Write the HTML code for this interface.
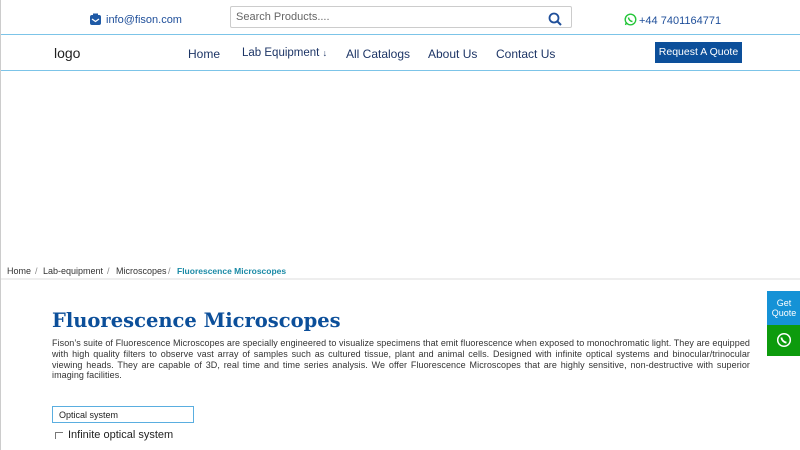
<!DOCTYPE html>
<html><head><meta charset="utf-8"><style>
*{margin:0;padding:0;box-sizing:border-box}
body{width:800px;height:450px;overflow:hidden;background:#fff;font-family:"Liberation Sans",sans-serif;position:relative;border-left:1px solid #ccc}
.a{position:absolute;white-space:nowrap}
.bc{position:absolute;top:266px;font-size:9px;color:#333;white-space:nowrap}
</style></head><body>
<svg class="a" style="left:88px;top:13px" width="13" height="13" viewBox="0 0 13 13"><rect x="1" y="2" width="11" height="10" rx="2" fill="#1f5aa6"/><path d="M3 6l3.5 2.5L10 6" stroke="#fff" stroke-width="1.3" fill="none"/><rect x="4" y="0.5" width="5" height="3" fill="#1f5aa6"/></svg>
<div class="a" style="left:105px;top:14px;font-size:11px;color:#1f4f9a">info@fison.com</div>
<div class="a" style="left:229px;top:6px;width:342px;height:22px;border:1px solid #ccc;border-radius:2px"></div>
<div class="a" style="left:235px;top:11px;font-size:11px;color:#666">Search Products....</div>
<svg class="a" style="left:547px;top:12px" width="14" height="14" viewBox="0 0 14 14"><circle cx="6" cy="6" r="4.5" stroke="#1f4f9a" stroke-width="1.8" fill="none"/><path d="M9.5 9.5l3.5 3.5" stroke="#1f4f9a" stroke-width="2"/></svg>
<svg class="a" style="left:623px;top:13px" width="13" height="13" viewBox="0 0 13 13"><circle cx="6.5" cy="6.5" r="5.3" stroke="#25c63a" stroke-width="1.4" fill="none"/><path d="M1.5 12l1-3" stroke="#25c63a" stroke-width="1.4"/><path d="M4.5 4.5c0 2 2 4 4 4" stroke="#25c63a" stroke-width="1.5" fill="none"/></svg>
<div class="a" style="left:638px;top:15px;font-size:11px;color:#1f4f9a">+44 7401164771</div>
<div class="a" style="left:0;top:34px;width:800px;height:37px;border-top:1px solid #7cc4e8;border-bottom:1px solid #7cc4e8;border-right:1px solid #7cc4e8"></div>
<div class="a" style="left:53px;top:45px;font-size:14px;color:#222">logo</div>
<div class="a" style="left:187px;top:47px;font-size:12px;color:#1d3566">Home</div>
<div class="a" style="left:241px;top:47px;font-size:11.5px;color:#1d3566">Lab Equipment <span style="font-size:9px">↓</span></div>
<div class="a" style="left:345px;top:47px;font-size:12px;color:#1d3566">All Catalogs</div>
<div class="a" style="left:427px;top:47px;font-size:12px;color:#1d3566">About Us</div>
<div class="a" style="left:495px;top:47px;font-size:12px;color:#1d3566">Contact Us</div>
<div class="a" style="left:654px;top:42px;width:87px;height:21px;background:#0c4f9a;color:#fff;font-size:10.5px;text-align:center;line-height:21px">Request A Quote</div>
<div class="bc" style="left:6px">Home</div>
<div class="bc" style="left:34px;color:#888">/</div>
<div class="bc" style="left:42px">Lab-equipment</div>
<div class="bc" style="left:106px;color:#888">/</div>
<div class="bc" style="left:115px">Microscopes</div>
<div class="bc" style="left:167px;color:#888">/</div>
<div class="bc" style="left:176px;font-size:8.5px;font-weight:bold;color:#1a8aa6">Fluorescence Microscopes</div>
<div class="a" style="left:0;top:278px;width:800px;height:2px;background:#eee"></div>
<div class="a" style="left:51px;top:309px;font-family:'DejaVu Serif',serif;font-weight:bold;font-size:19.5px;color:#0c4f9a">Fluorescence Microscopes</div>
<div class="a" style="left:51px;top:338px;width:698px;white-space:normal;font-size:9px;letter-spacing:0.07px;line-height:10.8px;color:#333;text-align:justify">Fison’s suite of Fluorescence Microscopes are specially engineered to visualize specimens that emit fluorescence when exposed to monochromatic light. They are equipped with high quality filters to observe vast array of samples such as cultured tissue, plant and animal cells. Designed with infinite optical systems and binocular/trinocular viewing heads. They are capable of 3D, real time and time series analysis. We offer Fluorescence Microscopes that are highly sensitive, non-destructive with superior imaging facilities.</div>
<div class="a" style="left:51px;top:406px;width:142px;height:17px;border:1px solid #5aaee0;font-size:9px;color:#222;padding:3px 6px">Optical system</div>
<div class="a" style="left:54px;top:432px;width:8px;height:7px;border-left:1px solid #777;border-top:1px solid #777"></div>
<div class="a" style="left:67px;top:429px;font-size:11px;color:#222">Infinite optical system</div>
<div class="a" style="left:766px;top:291px;width:34px;height:34px;background:#1592d6;color:#fff;font-size:9px;text-align:center;line-height:10px;padding-top:7px">Get<br>Quote</div>
<div class="a" style="left:766px;top:325px;width:34px;height:31px;background:#0d9b0d"></div>
<svg class="a" style="left:775px;top:332px" width="16" height="16" viewBox="0 0 16 16"><circle cx="8" cy="8" r="6.3" stroke="#fff" stroke-width="1.5" fill="none"/><path d="M5.5 5.5c0 2.5 2.5 5 5 5" stroke="#fff" stroke-width="1.8" fill="none"/></svg>
</body></html>
